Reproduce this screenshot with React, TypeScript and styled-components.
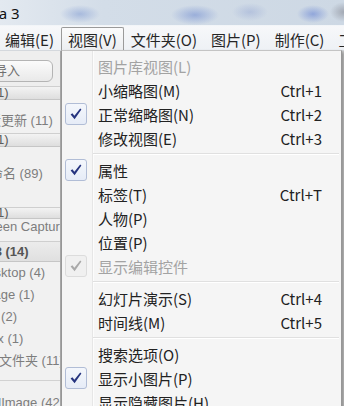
import * as React from "react";
import styled, { createGlobalStyle, css } from "styled-components";

const GlobalStyle = createGlobalStyle`
  html, body {
    margin: 0;
    padding: 0;
    background: #e6e6e6;
  }
`;

const UI_FONT = `"Noto Sans CJK SC", "Noto Sans", sans-serif`;
const SIDE_FONT = `"Liberation Sans", "Noto Sans CJK SC", sans-serif`;

type MenuEntry =
  | { sep: true }
  | {
      sep?: false;
      label: string;
      shortcut?: string;
      checked?: boolean;
      disabled?: boolean;
    };

const topMenus = ["编辑(E)", "视图(V)", "文件夹(O)", "图片(P)", "制作(C)", "工具(T)"];

const viewMenu: MenuEntry[] = [
  { label: "图片库视图(L)", disabled: true },
  { label: "小缩略图(M)", shortcut: "Ctrl+1" },
  { label: "正常缩略图(N)", shortcut: "Ctrl+2", checked: true },
  { label: "修改视图(E)", shortcut: "Ctrl+3" },
  { sep: true },
  { label: "属性", checked: true },
  { label: "标签(T)", shortcut: "Ctrl+T" },
  { label: "人物(P)" },
  { label: "位置(P)" },
  { label: "显示编辑控件", checked: true, disabled: true },
  { sep: true },
  { label: "幻灯片演示(S)", shortcut: "Ctrl+4" },
  { label: "时间线(M)", shortcut: "Ctrl+5" },
  { sep: true },
  { label: "搜索选项(O)" },
  { label: "显示小图片(P)", checked: true },
  { label: "显示隐藏图片(H)" },
];

type SideKind = "head" | "item" | "group" | "rule";

interface ISideRow {
  kind: SideKind;
  text?: string;
  x?: number; // where the text starts, left of the visible edge
  h: number;
  pt?: number;
}

const sideRows: ISideRow[] = [
  { kind: "head", text: "相册 (1)", x: -37, h: 14 },
  { kind: "item", text: "最近更新 (11)", x: -25, h: 33, pt: 13 },
  { kind: "head", text: "人物 (1)", x: -37, h: 14 },
  { kind: "item", text: "未命名 (89)", x: -23, h: 60, pt: 19 },
  { kind: "head", text: "文件夹 (1)", x: -50, h: 12 },
  { kind: "item", text: "Screen Capture", x: -24, h: 22, pt: 0 },
  { kind: "group", text: "2013 (14)", x: -27, h: 21 },
  { kind: "item", text: "Desktop (4)", x: -22, h: 22, pt: 3 },
  { kind: "item", text: "Image (1)", x: -21, h: 22, pt: 3 },
  { kind: "item", text: "Photos (2)", x: -43, h: 22, pt: 3 },
  { kind: "item", text: "Inbox (1)", x: -28, h: 22, pt: 3 },
  { kind: "item", text: "新建文件夹 (11)", x: -27, h: 22, pt: 3 },
  { kind: "rule", h: 19 },
  { kind: "item", text: "VisualImage (42)", x: -34, h: 22, pt: 4 },
];

const CheckMark = ({ disabled }: { disabled?: boolean }) => (
  <svg width="12" height="12" viewBox="0 0 12 12">
    <polygon
      points="0.6,6.6 2.4,5.2 4.4,7.7 10.2,0.6 11.4,1.6 4.6,11.2"
      fill={disabled ? "#a9a9a9" : "#26347f"}
    />
  </svg>
);

const App = () => {
  return (
    <Page>
      <GlobalStyle />
      <TitleBar>
        <TitleText>Picasa 3</TitleText>
      </TitleBar>
      <MenuBar>
        {topMenus.map((m) => (
          <TopItem key={m} $open={m === "视图(V)"}>
            {m}
          </TopItem>
        ))}
      </MenuBar>
      <Body>
        <Sidebar>
          <ImportButton>
            <ClipText $x={-7}>导入</ClipText>
          </ImportButton>
          {sideRows.map((r, i) =>
            r.kind === "rule" ? (
              <SideRule key={i} $h={r.h} />
            ) : (
              <SideRow key={i} $kind={r.kind} $h={r.h} $pt={r.pt}>
                <ClipText $x={r.x || 0}>{r.text}</ClipText>
              </SideRow>
            )
          )}
        </Sidebar>
        <Workspace />
      </Body>

      <Dropdown>
        <Gutter />
        {viewMenu.map((e, i) =>
          e.sep ? (
            <Separator key={i} />
          ) : (
            <MenuRow key={i} $disabled={e.disabled}>
              <CheckCell>
                {e.checked && (
                  <CheckBox $disabled={e.disabled}>
                    <CheckMark disabled={e.disabled} />
                  </CheckBox>
                )}
              </CheckCell>
              <Label>{e.label}</Label>
              <Shortcut>{e.shortcut}</Shortcut>
            </MenuRow>
          )
        )}
      </Dropdown>
    </Page>
  );
};

export default App;

const Page = styled.div`
  position: relative;
  width: 344px;
  height: 406px;
  overflow: hidden;
  display: flex;
  flex-direction: column;
  font-family: ${UI_FONT};
`;

const TitleBar = styled.div`
  height: 25px;
  flex: none;
  display: flex;
  align-items: center;
  overflow: hidden;
  background:
    radial-gradient(ellipse 20px 9px at 80px 14px, rgba(110, 140, 205, 0.45), transparent),
    radial-gradient(ellipse 24px 10px at 195px 15px, rgba(100, 130, 205, 0.5), transparent),
    radial-gradient(ellipse 18px 9px at 250px 12px, rgba(130, 150, 205, 0.35), transparent),
    radial-gradient(ellipse 16px 9px at 313px 14px, rgba(95, 125, 210, 0.55), transparent),
    radial-gradient(ellipse 14px 10px at 344px 12px, rgba(110, 110, 120, 0.45), transparent),
    linear-gradient(90deg, #e3e9f0 0%, #d3dde8 30%, #cdd8e4 100%);
`;

const TitleText = styled.span`
  margin-left: -37px;
  font-family: "Noto Sans", sans-serif;
  font-size: 15px;
  color: #111;
  white-space: nowrap;
`;

const MenuBar = styled.div`
  height: 25px;
  flex: none;
  display: flex;
  align-items: flex-end;
  margin-left: -2px;
  background: linear-gradient(#f7f8fa, #eef1f5);
  border-top: 1px solid #f2f5f8;
  box-sizing: border-box;
`;

const TopItem = styled.div<{ $open?: boolean }>`
  height: 23px;
  box-sizing: border-box;
  padding: 0 6px;
  display: flex;
  align-items: center;
  font-size: 15px;
  color: #262626;
  white-space: nowrap;
  border: 1px solid transparent;
  border-bottom: none;
  ${(p) =>
    p.$open &&
    css`
      border-color: #9a9a9a;
      border-radius: 2px 2px 0 0;
      background: linear-gradient(#fbfbfc, #eceef1);
    `}
`;

const Body = styled.div`
  flex: 1;
  display: flex;
  min-height: 0;
  border-top: 1px solid #d4d8dd;
`;

const Sidebar = styled.div`
  width: 60px;
  flex: none;
  display: flex;
  flex-direction: column;
  overflow: hidden;
  background: #eeeeee;
  border-right: 1px solid #a9a9a9;
  font-family: ${SIDE_FONT};
  font-size: 13px;
`;

const ClipText = styled.span<{ $x: number }>`
  display: block;
  margin-left: ${(p) => p.$x}px;
  white-space: nowrap;
  line-height: 16px;
`;

const ImportButton = styled.div`
  flex: none;
  height: 22px;
  margin: 9px 7px 4px -10px;
  box-sizing: border-box;
  display: flex;
  align-items: center;
  padding-left: 10px;
  border: 1px solid #b4b4b4;
  border-radius: 6px;
  background: linear-gradient(#fbfbfb, #e9e9e9);
  color: #6f6f6f;
`;

const SideRow = styled.div<{ $kind: SideKind; $h: number; $pt?: number }>`
  flex: none;
  height: ${(p) => p.$h}px;
  box-sizing: border-box;
  display: flex;
  color: #7d7d7d;
  ${(p) =>
    p.$kind === "item"
      ? css`
          align-items: flex-start;
          padding-top: ${p.$pt || 0}px;
          background: #f1f1f1;
        `
      : css`
          align-items: center;
          color: #5c5c5c;
          background: linear-gradient(#f3f3f3, #dedede);
          border-top: 1px solid #cfcfcf;
          border-bottom: 1px solid #c6c6c6;
        `}
  ${(p) =>
    p.$kind === "group" &&
    css`
      font-weight: bold;
      color: #555;
      background: linear-gradient(#ececec, #e0e0e0);
    `}
`;

const SideRule = styled.div<{ $h: number }>`
  flex: none;
  height: ${(p) => p.$h}px;
  background: #f1f1f1;
  display: flex;
  align-items: center;

  &::after {
    content: "";
    flex: 1;
    height: 1px;
    margin-top: -2px;
    background: #d2d2d2;
  }
`;

const Workspace = styled.div`
  flex: 1;
  background: #cfcfcf;
`;

const Dropdown = styled.div`
  position: absolute;
  left: 61px;
  top: 50px;
  width: 281px;
  box-sizing: border-box;
  padding: 3px 0 6px;
  border: 1px solid #979797;
  border-top-color: #c4c4c4;
  background: #f5f5f5;
  box-shadow: 2px 2px 3px rgba(0, 0, 0, 0.3);
  font-size: 15px;
`;

const Gutter = styled.div`
  position: absolute;
  left: 30px;
  top: 0;
  bottom: 0;
  width: 1px;
  background: #e6e6e6;
  border-right: 1px solid #fcfcfc;
`;

const MenuRow = styled.div<{ $disabled?: boolean }>`
  position: relative;
  height: 24px;
  display: grid;
  grid-template-columns: 33px 1fr auto;
  align-items: center;
  padding-left: 3px;
  padding-right: 19px;
  color: ${(p) => (p.$disabled ? "#a3a3a3" : "#222222")};
  white-space: nowrap;
`;

const CheckCell = styled.div`
  display: flex;
  align-items: center;
`;

const CheckBox = styled.div<{ $disabled?: boolean }>`
  width: 22px;
  height: 22px;
  box-sizing: border-box;
  display: flex;
  align-items: center;
  justify-content: center;
  border-radius: 3px;
  border: 1px solid ${(p) => (p.$disabled ? "#dcdcdc" : "#b1bdd6")};
  background: ${(p) =>
    p.$disabled ? "#f0f0f0" : "linear-gradient(#f4f7fc, #e6ecf7)"};
`;

const Label = styled.span``;

const Shortcut = styled.span``;

const Separator = styled.div`
  position: relative;
  height: 8px;
  display: flex;
  align-items: center;
  padding-left: 31px;
  padding-right: 2px;

  &::after {
    content: "";
    flex: 1;
    height: 1px;
    background: #e0e0e0;
    border-bottom: 1px solid #ffffff;
  }
`;
